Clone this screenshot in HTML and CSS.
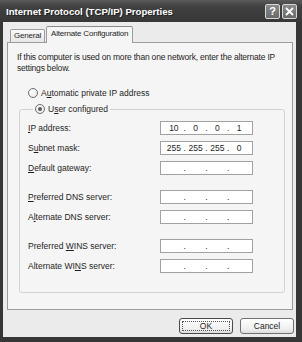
FILE: index.html
```html
<!DOCTYPE html>
<html lang="en">
<head>
<meta charset="UTF-8" />
<title>Internet Protocol (TCP/IP) Properties</title>
<link rel="stylesheet" href="styles.css">
</head>
<body>
  <div class="window">
    <div class="titlebar">
      <span class="title">Internet Protocol (TCP/IP) Properties</span>
      <span class="tb-btn help">?</span>
      <span class="tb-btn close">
        <svg width="9" height="9" viewBox="0 0 9 9"><path d="M1 1 L8 8 M8 1 L1 8" stroke="#fff" stroke-width="1.8" fill="none"/></svg>
      </span>
    </div>

    <div class="client">
      <div class="tabs">
        <div class="tab">General</div>
        <div class="tab active">Alternate Configuration</div>
      </div>

      <div class="panel">
        <p class="intro">If this computer is used on more than one network, enter the alternate IP<br>settings below.</p>

        <div class="radio auto"><span class="circle"></span><span>A<u>u</u>tomatic private IP address</span></div>

        <fieldset class="group">
          <legend><span class="radio"><span class="circle checked"></span><span>U<u>s</u>er configured</span></span></legend>

          <div class="row">
            <span><u>I</u>P address:</span>
            <div class="ip"><span>10</span><i>.</i><span>0</span><i>.</i><span>0</span><i>.</i><span>1</span></div>
          </div>
          <div class="row">
            <span>S<u>u</u>bnet mask:</span>
            <div class="ip"><span>255</span><i>.</i><span>255</span><i>.</i><span>255</span><i>.</i><span>0</span></div>
          </div>
          <div class="row">
            <span><u>D</u>efault gateway:</span>
            <div class="ip"><span></span><i>.</i><span></span><i>.</i><span></span><i>.</i><span></span></div>
          </div>

          <div class="row spaced">
            <span><u>P</u>referred DNS server:</span>
            <div class="ip"><span></span><i>.</i><span></span><i>.</i><span></span><i>.</i><span></span></div>
          </div>
          <div class="row">
            <span>A<u>l</u>ternate DNS server:</span>
            <div class="ip"><span></span><i>.</i><span></span><i>.</i><span></span><i>.</i><span></span></div>
          </div>

          <div class="row spaced">
            <span>Preferred <u>W</u>INS server:</span>
            <div class="ip"><span></span><i>.</i><span></span><i>.</i><span></span><i>.</i><span></span></div>
          </div>
          <div class="row">
            <span>Alternate WI<u>N</u>S server:</span>
            <div class="ip"><span></span><i>.</i><span></span><i>.</i><span></span><i>.</i><span></span></div>
          </div>
        </fieldset>
      </div>

      <div class="actions">
        <button class="btn default">OK</button>
        <button class="btn">Cancel</button>
      </div>
    </div>
  </div>
</body>
</html>
```

FILE: styles.css
```css
body {
  margin: 0;
  font-family: 'Liberation Sans', Arial, sans-serif;
  font-size: 8.5px;
  color: #1e1e1e;
}
.window {
  width: 302px;
  height: 342px;
  background: #363636;
  display: flex;
  flex-direction: column;
}
.titlebar {
  height: 22px;
  display: flex;
  align-items: center;
  padding: 0 5px 0 6px;
  background: linear-gradient(to bottom, #5a5a5a, #404040 30%, #383838);
}
.title {
  flex: 1;
  color: #fff;
  font-weight: bold;
  font-size: 9.6px;
  text-shadow: 1px 1px 0 #222;
}
.tb-btn {
  width: 13px;
  height: 13px;
  border: 1px solid #d8d8d8;
  border-radius: 2px;
  background: linear-gradient(to bottom, #8a8a8a, #6a6a6a);
  color: #fff;
  font-weight: bold;
  font-size: 11px;
  display: flex;
  align-items: center;
  justify-content: center;
  margin-left: 2px;
}
.client {
  flex: 1;
  margin: 0 6px 5px 3px;
  background: #ebebeb;
}
.tabs {
  display: flex;
  align-items: flex-end;
  gap: 1px;
  height: 15px;
  margin-top: 5px;
  padding-left: 7px;
  position: relative;
  z-index: 1;
  font-size: 8px;
  letter-spacing: -0.2px;
}
.tab {
  height: 12px;
  line-height: 12px;
  padding: 0 3px;
  border: 1px solid #9c9c9c;
  border-bottom: none;
  border-radius: 2px 2px 0 0;
  background: linear-gradient(to bottom, #fafafa, #e6e6e6);
}
.tab.active {
  height: 16px;
  line-height: 14px;
  margin-bottom: -1px;
  padding: 0 4px;
  background: #f5f5f5;
  border-top-color: #8a8a8a;
}
.panel {
  margin: 0 3px 0 4px;
  border: 1px solid #9c9c9c;
  background: #f5f5f5;
  padding: 9px 0 0 9px;
}
.intro {
  margin: 0;
  line-height: 11px;
  white-space: nowrap;
  letter-spacing: -0.2px;
}
.radio {
  display: flex;
  align-items: center;
  gap: 3px;
  height: 12px;
}
.radio.auto {
  margin: 13px 0 0 11px;
}
.circle {
  width: 8px;
  height: 8px;
  border: 1px solid #6e6e6e;
  border-radius: 50%;
  background: radial-gradient(circle at 35% 35%, #fff, #e4e4e4);
  position: relative;
}
.circle.checked::after {
  content: "";
  position: absolute;
  left: 2px;
  top: 2px;
  width: 4px;
  height: 4px;
  border-radius: 50%;
  background: #5a5a5a;
}
.group {
  margin: 4px 7px 16px 2px;
  padding: 3px 0 16px 8px;
  border: 1px solid #d2d2d2;
  border-radius: 3px;
}
.group legend {
  margin-left: 5px;
  padding: 0 2px;
}
.row {
  display: grid;
  grid-template-columns: 132px 93px;
  align-items: center;
  height: 20px;
}
.row.spaced {
  margin-top: 9px;
}
.ip {
  height: 12px;
  border: 1px solid #a2a2a2;
  background: #fff;
  display: flex;
  align-items: center;
  padding: 0 4px;
}
.ip span {
  flex: 1;
  text-align: center;
}
.ip i {
  font-style: normal;
  width: 4px;
  text-align: center;
}
.actions {
  display: flex;
  justify-content: flex-end;
  gap: 7px;
  margin-top: 8px;
  padding-right: 2px;
}
.btn {
  width: 54px;
  height: 16px;
  padding: 0;
  font-family: inherit;
  font-size: 8.5px;
  color: #1e1e1e;
  border: 1px solid #707070;
  border-radius: 3px;
  background: linear-gradient(to bottom, #ffffff, #f0f0f0 70%, #dcdcdc);
}
.btn.default {
  border-color: #4a4a4a;
  position: relative;
}
.btn.default::after {
  content: "";
  position: absolute;
  inset: 2px;
  border: 1px dotted #555;
}
```
